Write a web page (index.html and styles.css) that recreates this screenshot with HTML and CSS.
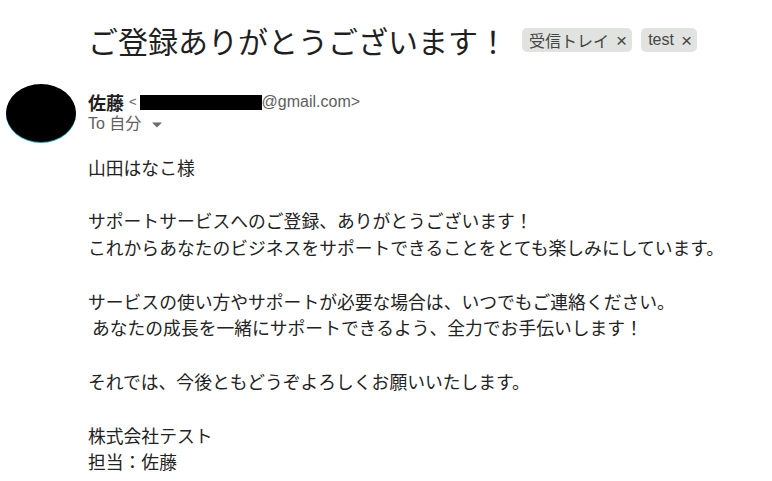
FILE: index.html
```html
<!DOCTYPE html>
<html lang="ja">
<head>
<meta charset="utf-8">
<title>ご登録ありがとうございます！</title>
<link rel="stylesheet" href="styles.css">
</head>
<body>
<div class="subject-row">
  <h1 class="subject">ご登録ありがとうございます！</h1>
  <span class="chip">受信トレイ<span class="x">×</span></span>
  <span class="chip">test<span class="x">×</span></span>
</div>
<div class="message">
  <div class="avatar"></div>
  <div class="content">
    <div class="sender"><span class="name">佐藤</span> <span class="lt">&lt;</span><span class="redact"></span><span class="addr">@gmail.com&gt;</span></div>
    <div class="to">To 自分 <svg class="caret" width="12" height="8" viewBox="0 0 12 8"><path d="M1 1.5h10L6 6.5z" fill="#6b6b6b"/></svg></div>
    <div class="body">山田はなこ様

サポートサービスへのご登録、ありがとうございます！
これからあなたのビジネスをサポートできることをとても楽しみにしています。

サービスの使い方やサポートが必要な場合は、いつでもご連絡ください。
 あなたの成長を一緒にサポートできるよう、全力でお手伝いします！

それでは、今後ともどうぞよろしくお願いいたします。

株式会社テスト
担当：佐藤</div>
  </div>
</div>
</body>
</html>
```
FILE: styles.css
```css
html, body {
  margin: 0;
  padding: 0;
  background: #fff;
}
body {
  font-family: Roboto, "Noto Sans CJK JP", "Noto Sans", sans-serif;
  color: #1f1f1f;
  width: 772px;
  height: 481px;
  overflow: hidden;
}
.subject-row {
  display: flex;
  align-items: center;
  padding: 24px 0 0 88px;
  height: 32px;
}
.subject {
  margin: 0;
  font-family: "Noto Sans CJK JP", sans-serif;
  font-weight: 400;
  font-size: 30px;
  line-height: 32px;
  color: #1f1f1f;
  white-space: nowrap;
}
.chip {
  display: inline-flex;
  align-items: center;
  height: 24px;
  margin-left: 9px;
  padding: 0 5px 0 7px;
  border-radius: 5px;
  background: #e1e3e0;
  color: #444746;
  font-family: "Liberation Sans", "Noto Sans CJK JP", sans-serif;
  font-size: 16px;
  white-space: nowrap;
}
.subject + .chip {
  margin-left: 14px;
}
.chip .x {
  margin-left: 7px;
  font-size: 19px;
  line-height: 1;
  color: #444746;
}
.message {
  display: flex;
  align-items: flex-start;
  margin-top: 28px;
  padding-left: 6px;
}
.avatar {
  flex: none;
  width: 70px;
  height: 58px;
  border-radius: 50%;
  background: #000;
  box-shadow: 0 1px 0 #17a6b8;
  margin-right: 12px;
}
.content {
  display: flex;
  flex-direction: column;
  padding-top: 7px;
}
.sender {
  height: 22px;
  line-height: 22px;
  white-space: nowrap;
  display: flex;
  align-items: center;
}
.name {
  font-family: "Noto Sans CJK JP", sans-serif;
  font-weight: 700;
  font-size: 18px;
  color: #1f1f1f;
  margin-right: 5px;
}
.lt {
  font-family: "Liberation Sans", sans-serif;
  font-size: 13px;
  color: #5e5e5e;
  margin-right: 3px;
}
.redact {
  display: inline-block;
  width: 122px;
  height: 15px;
  background: #000;
}
.addr {
  font-family: "Liberation Sans", sans-serif;
  font-size: 16px;
  color: #5e5e5e;
}
.to {
  height: 22px;
  line-height: 22px;
  font-family: "Liberation Sans", "Noto Sans CJK JP", sans-serif;
  font-size: 16px;
  color: #5e5e5e;
  display: flex;
  align-items: center;
  white-space: pre;
}
.caret {
  margin-left: 5px;
  margin-top: 2px;
}
.body {
  margin-top: 18.6px;
  font-family: "Noto Sans CJK JP", sans-serif;
  font-size: 17.8px;
  line-height: 26.8px;
  color: #222;
  white-space: pre-wrap;
}
```
